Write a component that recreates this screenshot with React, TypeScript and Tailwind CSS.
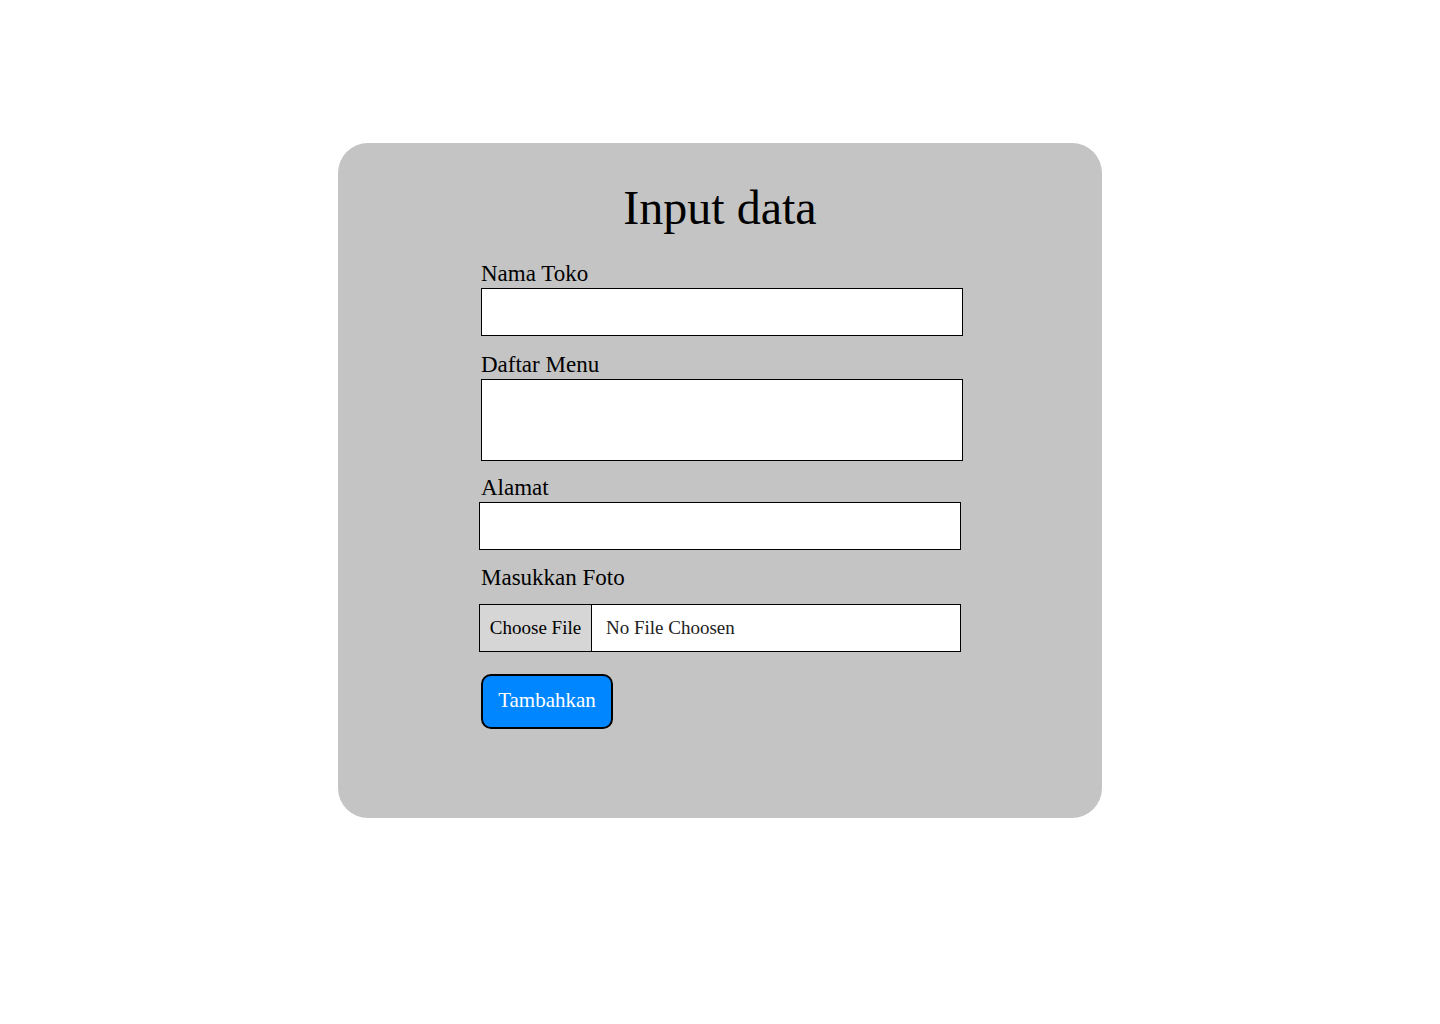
import React from "react";

export default function App() {
  return (
    <div
      className="min-h-[1024px] w-full bg-white pt-[143px]"
      style={{ fontFamily: '"Liberation Serif", serif' }}
    >
      <div className="mx-auto w-[764px] h-[675px] rounded-[30px] bg-[#c4c4c4] pt-[41px]">
        <h1 className="text-center text-[48px] leading-[48px] text-black">Input data</h1>
        <form className="ml-[143px] w-[482px]" onSubmit={(e) => e.preventDefault()}>
          <label className="mt-[30px] block text-[23px] leading-[23px] text-black">Nama Toko</label>
          <input
            type="text"
            className="mt-[3px] block h-[48px] w-[482px] border border-black bg-white outline-none"
          />
          <label className="mt-[17px] block text-[23px] leading-[23px] text-black">Daftar Menu</label>
          <textarea className="mt-[3px] block h-[82px] w-[482px] resize-none border border-black bg-white outline-none" />
          <label className="mt-[15px] block text-[23px] leading-[23px] text-black">Alamat</label>
          <input
            type="text"
            className="mt-[3px] -ml-[2px] block h-[48px] w-[482px] border border-black bg-white outline-none"
          />
          <label className="mt-[16px] block text-[23px] leading-[23px] text-black">Masukkan Foto</label>
          <div className="mt-[15px] -ml-[2px] flex h-[48px] w-[482px] border border-black bg-white">
            <div className="flex w-[112px] items-center justify-center border-r border-black bg-[#d6d6d6] text-[19px] text-black">
              Choose File
            </div>
            <div className="flex items-center pl-[14px] text-[19px] text-[#222]">No File Choosen</div>
          </div>
          <button
            type="submit"
            className="mt-[22px] flex h-[55px] w-[132px] items-center justify-center rounded-[10px] border-2 border-black bg-[#0087ff] pb-[2px] text-[21px] text-white"
          >
            Tambahkan
          </button>
        </form>
      </div>
    </div>
  );
}
